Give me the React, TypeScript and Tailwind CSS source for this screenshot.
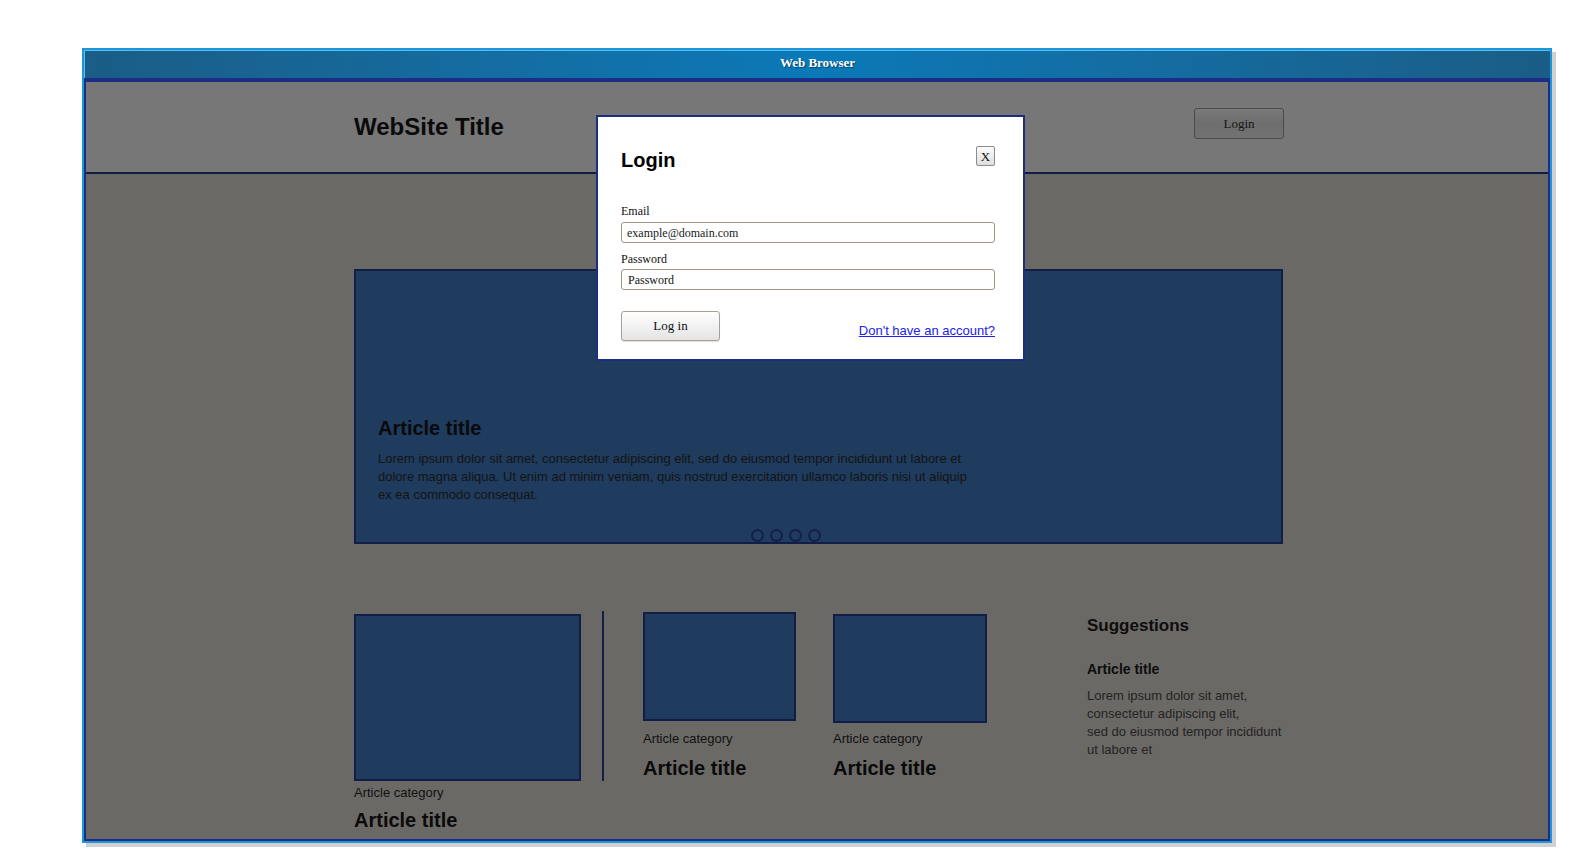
export default function App() {
  const serif = "font-['Liberation_Serif','Times_New_Roman',serif]";
  return (
    <div className="relative w-[1582px] h-[857px] bg-white overflow-hidden font-['Liberation_Sans',Arial,sans-serif]">
      <div className="pt-[48px] pl-[82px]">
        <div className="w-[1470px] h-[795px] flex flex-col border-2 border-[#1f95da] shadow-[4px_4px_0_0_#d0d0d0]">
          <div className="h-[28px] shrink-0 flex items-center justify-center pb-[4px] bg-linear-to-r from-[#1a5d86] via-[#0a79b8] to-[#1a5d86] border-t border-l border-[#4fc0f2]">
            <span className={`${serif} font-bold text-[13px] leading-none text-white [text-shadow:1px_1px_1px_rgba(0,0,0,0.45)]`}>
              Web Browser
            </span>
          </div>
          <div className="flex-1 flex flex-col border-t-4 border-x-2 border-b-2 border-[#1c2d86]">
            <div className="h-[92px] shrink-0 bg-[#777777] border-b-2 border-[#131c45] flex items-center pl-[268px] pb-[5px]">
              <div className="w-[930px] flex items-center justify-between">
                <h1 className="pt-[4px] text-[24px] leading-[24px] font-bold text-[#0a0a0a]">WebSite Title</h1>
                <div className={`mb-[2px] w-[90px] h-[31px] flex items-center justify-center rounded-[3px] border border-[#4a4a4a] bg-linear-to-b from-[#7a7a7a] via-[#6e6e6e] to-[#727272] ${serif} text-[13px] text-[#151515]`}>
                  Login
                </div>
              </div>
            </div>
            <div className="flex-1 bg-[#6b6965] pl-[268px] pt-[95px]">
              <div className="relative w-[929px] h-[275px] bg-[#1f3b5d] border-2 border-[#121e48] pl-[22px] pt-[145px]">
                <h2 className="text-[20px] leading-[24px] font-bold text-[#0a0a0a]">Article title</h2>
                <p className="mt-[10px] w-[600px] text-[13px] leading-[18px] text-[#141414]">
                  Lorem ipsum dolor sit amet, consectetur adipiscing elit, sed do eiusmod tempor incididunt ut labore et dolore magna aliqua. Ut enim ad minim veniam, quis nostrud exercitation ullamco laboris nisi ut aliquip ex ea commodo consequat.
                </p>
                <div className="absolute left-[395px] bottom-0 flex gap-[6px]">
                  <div className="w-[13px] h-[13px] rounded-full border-2 border-[#151f48]" />
                  <div className="w-[13px] h-[13px] rounded-full border-2 border-[#151f48]" />
                  <div className="w-[13px] h-[13px] rounded-full border-2 border-[#151f48]" />
                  <div className="w-[13px] h-[13px] rounded-full border-2 border-[#151f48]" />
                </div>
              </div>
              <div className="mt-[67px] flex items-start">
                <div className="mt-[3px] w-[227px]">
                  <div className="h-[167px] border-2 border-[#121e48] bg-[#1f3b5d]" />
                  <div className="mt-[4px] text-[13px] leading-[16px] text-[#111111]">Article category</div>
                  <div className="mt-[7px] text-[20px] leading-[24px] font-bold text-[#0a0a0a]">Article title</div>
                </div>
                <div className="ml-[21px] w-[2px] h-[170px] bg-[#121e48]" />
                <div className="ml-[39px] mt-[1px] w-[153px]">
                  <div className="h-[109px] border-2 border-[#121e48] bg-[#1f3b5d]" />
                  <div className="mt-[10px] text-[13px] leading-[16px] text-[#111111]">Article category</div>
                  <div className="mt-[9px] text-[20px] leading-[24px] font-bold text-[#0a0a0a]">Article title</div>
                </div>
                <div className="ml-[37px] mt-[3px] w-[154px]">
                  <div className="h-[109px] border-2 border-[#121e48] bg-[#1f3b5d]" />
                  <div className="mt-[8px] text-[13px] leading-[16px] text-[#111111]">Article category</div>
                  <div className="mt-[9px] text-[20px] leading-[24px] font-bold text-[#0a0a0a]">Article title</div>
                </div>
                <div className="ml-[100px] mt-[5px]">
                  <div className="text-[17px] leading-[20px] font-bold text-[#0d0d0d]">Suggestions</div>
                  <div className="mt-[25px] text-[14px] leading-[16px] font-bold text-[#0d0d0d]">Article title</div>
                  <p className="mt-[10px] text-[13px] leading-[18px] text-[#232323]">
                    Lorem ipsum dolor sit amet,
                    <br />
                    consectetur adipiscing elit,
                    <br />
                    sed do eiusmod tempor incididunt
                    <br />
                    ut labore et
                  </p>
                </div>
              </div>
            </div>
          </div>
        </div>
      </div>

      <div className="absolute left-[596px] top-[115px] w-[429px] h-[246px] bg-white border-2 border-[#1b2f80] pl-[23px] pt-[29px]">
        <div className="w-[374px] flex justify-between items-start">
          <h2 className="mt-[2px] text-[20px] leading-[24px] font-bold text-black">Login</h2>
          <div className={`w-[19px] h-[20px] flex items-center justify-center rounded-[2px] border border-[#8c8c8c] bg-linear-to-b from-[#fbfbfb] to-[#dedede] ${serif} text-[13px] leading-none text-[#111]`}>
            X
          </div>
        </div>
        <div className={`mt-[32px] ${serif} text-[12px] leading-[14px] text-[#111]`}>Email</div>
        <div className={`mt-[4px] w-[374px] h-[21px] flex items-center rounded-[3px] border border-[#a39585] px-[5px] ${serif} text-[12px] text-[#1a1a1a]`}>
          example@domain.com
        </div>
        <div className={`mt-[9px] ${serif} text-[12px] leading-[14px] text-[#111]`}>Password</div>
        <div className={`mt-[3px] w-[374px] h-[21px] flex items-center rounded-[3px] border border-[#a39585] px-[6px] ${serif} text-[12px] text-[#111]`}>
          Password
        </div>
        <div className="mt-[21px] w-[374px] flex justify-between items-end">
          <div className={`w-[99px] h-[30px] flex items-center justify-center rounded-[3px] border border-[#a8a096] bg-linear-to-b from-[#ffffff] to-[#e4e4e4] shadow-[0_1px_1px_rgba(0,0,0,0.12)] ${serif} text-[13px] text-[#111]`}>
            Log in
          </div>
          <span className="mb-[3px] text-[13px] leading-[15px] underline text-[#2020f0]">Don't have an account?</span>
        </div>
      </div>
    </div>
  );
}
